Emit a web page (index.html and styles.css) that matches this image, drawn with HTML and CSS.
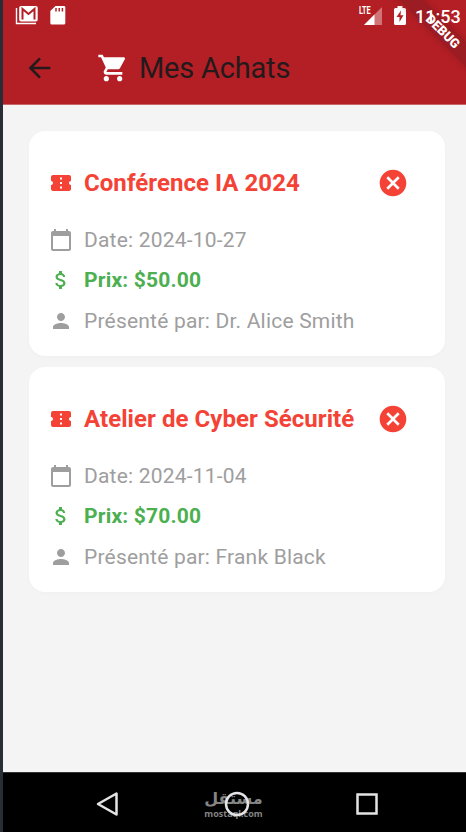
FILE: index.html
```html
<!DOCTYPE html>
<html lang="fr">
<head>
<meta charset="utf-8">
<title>Mes Achats</title>
<link rel="stylesheet" href="styles.css">
</head>
<body>
<svg class="defs" width="0" height="0">
  <symbol id="ticket" viewBox="0 0 24 24"><path d="M22 10V6c0-1.110-.9-2-2-2H4c-1.100 0-1.990.89-1.990 2v4c1.100 0 1.990.9 1.990 2s-.89 2-2 2v4c0 1.100.9 2 2 2h16c1.100 0 2-.9 2-2v-4c-1.100 0-2-.9-2-2s.9-2 2-2zm-9 7.500h-2v-2h2v2zm0-4.500h-2v-2h2v2zm0-4.500h-2v-2h2v2z"/></symbol>
  <symbol id="calendar" viewBox="0 0 24 24"><path d="M20 3h-1V1h-2v2H7V1H5v2H4c-1.100 0-2 .9-2 2v16c0 1.100.9 2 2 2h16c1.100 0 2-.9 2-2V5c0-1.100-.9-2-2-2zm0 18H4V8h16v13z"/></symbol>
  <symbol id="dollar" viewBox="0 0 24 24"><path d="M11.800 10.900c-2.270-.59-3-1.200-3-2.150 0-1.090 1.010-1.850 2.700-1.850 1.780 0 2.440.85 2.500 2.100h2.210c-.07-1.720-1.120-3.300-3.210-3.810V3h-3v2.160c-1.940.42-3.500 1.680-3.500 3.610 0 2.310 1.910 3.460 4.700 4.130 2.500.6 3 1.480 3 2.410 0 .69-.49 1.790-2.700 1.790-2.060 0-2.870-.92-2.980-2.100h-2.200c.12 2.190 1.760 3.420 3.680 3.830V21h3v-2.150c1.950-.37 3.500-1.500 3.500-3.550 0-2.840-2.430-3.810-4.700-4.400z"/></symbol>
  <symbol id="person" viewBox="0 0 24 24"><path d="M12 12c2.210 0 4-1.790 4-4s-1.790-4-4-4-4 1.790-4 4 1.790 4 4 4zm0 2c-2.670 0-8 1.340-8 4v2h16v-2c0-2.660-5.330-4-8-4z"/></symbol>
  <symbol id="cancel" viewBox="0 0 24 24"><path d="M12 2C6.470 2 2 6.470 2 12s4.470 10 10 10 10-4.470 10-10S17.530 2 12 2zm5 13.590L15.590 17 12 13.410 8.410 17 7 15.590 10.590 12 7 8.410 8.410 7 12 10.590 15.590 7 17 8.410 13.410 12 17 15.590z"/></symbol>
</svg>
<div class="screen">
  <header class="top">
    <div class="status">
      <svg class="notif" width="60" height="24" viewBox="0 0 60 24">
        <path d="M1.500 8v15.500H21" fill="none" stroke="#fff" stroke-width="1.400"/>
        <rect x="4.200" y="6" width="18.500" height="15.500" rx="1.800" fill="#fff"/>
        <path d="M7.500 19.500V9l6 5L19.500 9v10.500" fill="none" stroke="#b31f25" stroke-width="2"/>
        <path d="M40.500 6H49q1.300 0 1.300 1.400V23q0 1.500-1.500 1.500h-12q-1.500 0-1.500-1.500V11z" fill="#fff"/>
        <path d="M41 8v3.500M44.200 8v3.500M47.400 8v3.500" stroke="#b31f25" stroke-width="1.500"/>
      </svg>
      <span class="lte">LTE</span>
      <svg class="signal" width="20" height="20" viewBox="0 0 20 20">
        <path d="M19 1v18H1z" fill="#fff" opacity=".38"/><path d="M11.500 8.500V19H1z" fill="#fff"/>
      </svg>
      <svg class="battery" width="14" height="20" viewBox="0 0 14 20">
        <path d="M4.500 0h5v2h2q1.500 0 1.500 1.500v14q0 1.500-1.500 1.500h-9Q1 19 1 17.500v-14Q1 2 2.500 2h2z" fill="#fff"/><path d="M8 4.500 3.500 11h3V16L10.500 9.300h-3z" fill="#b31f25"/>
      </svg>
      <time class="clock">11:53</time>
    </div>
    <div class="appbar">
      <svg class="back" width="32" height="32" viewBox="0 0 24 24"><path d="M19.800 12H5M12 4.700 4.800 12l7.200 7.300" fill="none" stroke="#241a1c" stroke-width="1.900"/></svg>
      <svg class="cart" width="32" height="32" viewBox="0 0 24 24"><path fill="#fff" d="M7 18c-1.100 0-1.990.9-1.990 2S5.900 22 7 22s2-.9 2-2-.9-2-2-2zM1 2v2h2l3.600 7.590-1.350 2.450c-.16.280-.25.610-.25.960 0 1.100.9 2 2 2h12v-2H7.420c-.14 0-.25-.11-.25-.25l.03-.12.9-1.630h7.450c.75 0 1.410-.41 1.750-1.030l3.580-6.490c.08-.14.12-.31.12-.48 0-.55-.45-1-1-1H5.210l-.94-2H1zm16 16c-1.100 0-1.990.9-1.990 2s.89 2 1.990 2 2-.9 2-2-.9-2-2-2z"/></svg>
      <h1>Mes Achats</h1>
    </div>
    <div class="ribbon"><span>DEBUG</span></div>
  </header>
  <main>
    <article class="card">
      <div class="head"><svg class="icon"><use href="#ticket"/></svg><h2>Conférence IA 2024</h2><svg class="close"><use href="#cancel"/></svg></div>
      <div class="row"><svg class="icon"><use href="#calendar"/></svg><span>Date: 2024-10-27</span></div>
      <div class="row price"><svg class="icon"><use href="#dollar"/></svg><span>Prix: $50.00</span></div>
      <div class="row"><svg class="icon"><use href="#person"/></svg><span>Présenté par: Dr. Alice Smith</span></div>
    </article>
    <article class="card">
      <div class="head"><svg class="icon"><use href="#ticket"/></svg><h2>Atelier de Cyber Sécurité</h2><svg class="close"><use href="#cancel"/></svg></div>
      <div class="row"><svg class="icon"><use href="#calendar"/></svg><span>Date: 2024-11-04</span></div>
      <div class="row price"><svg class="icon"><use href="#dollar"/></svg><span>Prix: $70.00</span></div>
      <div class="row"><svg class="icon"><use href="#person"/></svg><span>Présenté par: Frank Black</span></div>
    </article>
  </main>
  <nav class="nav">
    <svg width="24" height="26" viewBox="0 0 24 26"><path d="M20.500 2.500v21L2 13z" fill="none" stroke="#e4e4e4" stroke-width="2.500" stroke-linejoin="round"/></svg>
    <div class="home">
      <div class="mark"><span class="ar" lang="ar">مستقل</span><span class="en">mostaql.com</span></div>
      <svg class="ring" width="26" height="26" viewBox="0 0 26 26"><circle cx="13" cy="13" r="11" fill="none" stroke="#e4e4e4" stroke-width="2.500"/></svg>
    </div>
    <svg width="24" height="26" viewBox="0 0 24 26"><rect x="2.500" y="3.500" width="19" height="19" fill="none" stroke="#e4e4e4" stroke-width="2.500"/></svg>
  </nav>
</div>
</body>
</html>
```
FILE: styles.css
```css
* { box-sizing: border-box; }
body { margin: 0; font-family: Roboto, sans-serif; background: #f4f4f4; }
h1, h2 { margin: 0; font-weight: 400; white-space: nowrap; }
svg { display: block; flex: none; }
.defs { position: absolute; }
.screen { width: 466px; height: 832px; border-left: 3px solid #292d35; display: flex; flex-direction: column; overflow: hidden; }
.top { position: relative; height: 105px; background: #b31f25; border-bottom: 1px solid #c9666a; overflow: hidden; flex: none; }
.status { height: 32px; display: flex; align-items: flex-start; }
.notif { margin-left: 12px; overflow: visible; }
.lte { width: 13px; margin: 4px 0 0 284px; color: #fff; font: 700 11px/14px Roboto, sans-serif; transform: scaleX(.66); transform-origin: left; }
.signal { margin: 6px 0 0 -9px; }
.battery { margin: 6px 0 0 10px; }
.clock { position: relative; z-index: 2; margin: 6px 0 0 8px; color: #fff; font-size: 18px; font-weight: 500; line-height: 22px; }
.appbar { height: 71px; display: flex; align-items: center; }
.back { margin-left: 21px; }
.cart { margin-left: 41px; }
h1 { margin-left: 10px; font-size: 29px; line-height: 36px; letter-spacing: -.2px; color: #241a1c; }
.ribbon { position: absolute; right: -52px; top: 23px; width: 150px; height: 17px; background: #9b1c22; transform: rotate(45deg); text-align: center; box-shadow: 0 0 6px #84181d99; color: #fff; font-size: 13px; line-height: 17px; font-weight: 900; }
main { flex: 1; background: #f4f4f4; padding: 26px 21px 0 26px; display: flex; flex-direction: column; gap: 11px; }
.card { height: 225px; background: #fff; border-radius: 16px; padding: 25.500px 38px 0 20px; box-shadow: 0 1px 4px #00000006; }
.head { height: 52px; display: flex; align-items: center; margin-bottom: 11px; color: #f44336; }
.icon { width: 24px; height: 24px; fill: currentColor; margin-right: 11px; }
h2 { flex: 1; font-size: 24px; font-weight: 700; line-height: 30px; letter-spacing: .06px; }
.close { width: 32px; height: 32px; fill: currentColor; margin-right: -2px; }
.row { height: 40.500px; display: flex; align-items: center; color: #9e9e9e; font-size: 21px; letter-spacing: .2px; white-space: nowrap; }
.price { color: #4caf50; font-weight: 700; }
.nav { height: 60px; background: #000; border-top: 1px solid #333; display: grid; grid-template-columns: 24px 1fr 24px; align-items: center; padding: 3px 87px 0 93px; flex: none; }
.home { position: relative; height: 40px; display: flex; justify-content: center; align-items: center; }
.mark { width: 58px; margin: 0 8px 0 0; display: flex; flex-direction: column; align-items: center; color: #858585; }
.ar { font: 700 16px/19px "DejaVu Sans", sans-serif; }
.en { font: 700 9px/13px "Open Sans", sans-serif; margin-top: -1px; }
.ring { position: absolute; left: calc(50% - 14px); top: 7px; }
```
